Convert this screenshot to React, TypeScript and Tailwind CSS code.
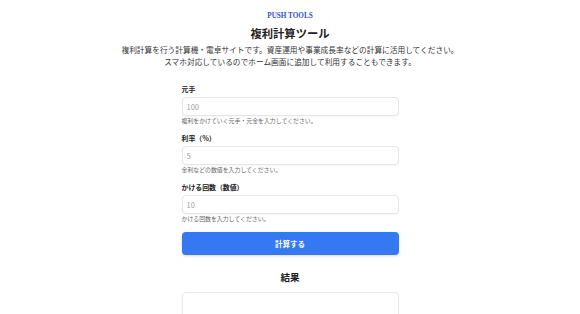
import React from "react";

const jp = { fontFamily: '"Noto Sans CJK JP", "Noto Sans", sans-serif' };

function Field({ label, placeholder, help }: { label: string; placeholder: string; help: string }) {
  return (
    <div className="flex flex-col">
      <label className="text-[6.9px] leading-[10px] font-bold text-[#222]">{label}</label>
      <input
        className="mt-[3px] h-[19px] w-full rounded-[4px] border border-[#e6e6e6] bg-white px-[4px] text-[7.5px] text-[#333] placeholder:text-[#a0a0a0] shadow-[0_1px_2px_rgba(0,0,0,0.04)] outline-none"
        placeholder={placeholder}
        style={jp}
      />
      <p className="mt-[1px] text-[5.9px] leading-[8px] text-[#666]">{help}</p>
    </div>
  );
}

export default function App() {
  return (
    <div className="h-[314px] w-full overflow-hidden bg-white text-[#222]" style={jp}>
      <div className="flex flex-col items-center pt-[11px]">
        <div
          className="text-[7.2px] leading-[10px] font-bold text-[#2f4fd8]"
          style={{ fontFamily: '"Liberation Serif", serif' }}
        >
          PUSH TOOLS
        </div>
        <h1 className="mt-[4px] text-[11.3px] leading-[16px] font-bold text-[#222]">複利計算ツール</h1>
        <p className="mt-[3px] text-center text-[7.7px] leading-[12px] text-[#333]">
          複利計算を行う計算機・電卓サイトです。資産運用や事業成長率などの計算に活用してください。
          <br />
          スマホ対応しているのでホーム画面に追加して利用することもできます。
        </p>
      </div>
      <div className="mx-auto mt-[16px] flex w-[217px] flex-col">
        <div className="flex flex-col gap-[8px]">
          <Field label="元手" placeholder="100" help="複利をかけていく元手・元金を入力してください。" />
          <Field label="利率（%）" placeholder="5" help="金利などの数値を入力してください。" />
          <Field label="かける回数（数値）" placeholder="10" help="かける回数を入力してください。" />
        </div>
        <button className="mt-[9px] h-[23px] w-full rounded-[4px] bg-[#3478f2] text-[7.5px] font-bold text-white shadow-[0_1px_3px_rgba(0,0,0,0.15)]">
          計算する
        </button>
        <h2 className="mt-[15px] text-center text-[9.5px] leading-[14px] font-bold text-[#222]">結果</h2>
        <div className="mt-[8px] h-[40px] shrink-0 rounded-[4px] border border-[#eaeaea] bg-white shadow-[0_1px_3px_rgba(0,0,0,0.05)]"></div>
      </div>
    </div>
  );
}
